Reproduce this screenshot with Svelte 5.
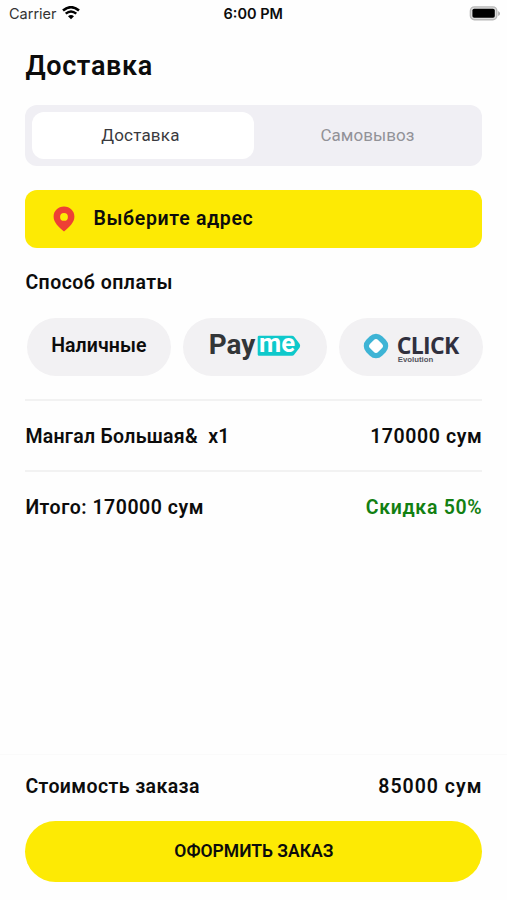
<script lang="ts">
    let mode = $state("delivery");

    const modes = [
        { id: "delivery", label: "Доставка" },
        { id: "pickup", label: "Самовывоз" },
    ];

    const price = 170000;
    const discount = 50;
    const total = price * (100 - discount) / 100;
</script>

<div class="screen">
    <div class="status">
        <div class="carrier">
            <span>Carrier</span>
            <svg width="18" height="14" viewBox="0 0 18 14">
                <path d="M1 4.6 Q9 -2.2 17 4.6" fill="none" stroke="#000" stroke-width="2.6" />
                <path d="M3.7 7.7 Q9 3.2 14.3 7.7" fill="none" stroke="#000" stroke-width="2.4" />
                <path d="M6 10.2 Q9 7.6 12 10.2 L9 13.2 Z" />
            </svg>
        </div>
        <span class="time">6:00 PM</span>
        <svg class="battery" width="32" height="15" viewBox="0 0 32 15">
            <rect x="1.4" y="0.9" width="26.4" height="12.8" rx="4" fill="#ddd" stroke="#b8b8b8" stroke-width="1.4" />
            <rect x="3.4" y="2.8" width="22.4" height="9" rx="1.8" />
            <path d="M29.2 5 Q31 6 31 7.5 Q31 9 29.2 10 Z" fill="#aaa" />
        </svg>
    </div>

    <h1>Доставка</h1>

    <div class="tabs">
        {#each modes as item}
            <button class="tab {item.id}" class:active={mode === item.id} onclick={() => (mode = item.id)}>{item.label}</button>
        {/each}
    </div>

    <button class="address">
        <svg width="22" height="26" viewBox="0 0 22 26">
            <path fill="#ee4035" fill-rule="evenodd" d="M11 0.6 C5 0.6 0.6 5 0.6 10.6 C0.6 16.5 5.4 21 11 25.4 C16.6 21 21.4 16.5 21.4 10.6 C21.4 5 17 0.6 11 0.6 Z M11 7 A3.9 3.9 0 1 1 11 14.8 A3.9 3.9 0 1 1 11 7 Z" />
        </svg>
        <span>Выберите адрес</span>
    </button>

    <h2>Способ оплаты</h2>

    <div class="payments">
        <button class="pay cash">Наличные</button>
        <button class="pay" aria-label="Payme">
            <svg width="94" height="36" viewBox="0 0 94 36">
                <path d="M51 6.7 H84 Q85.4 6.7 86.3 7.9 L91.7 15 Q92.6 16.7 91.7 18.4 L86.3 25.5 Q85.4 26.7 84 26.7 H51 Q49.7 26.7 49.7 25.5 V7.9 Q49.7 6.7 51 6.7 Z" fill="#0fc9cb" />
                <text x="0.8" y="24.6" class="payme" fill="#333638" textLength="46.5" lengthAdjust="spacingAndGlyphs">Pay</text>
                <text x="51" y="23.4" class="payme me" fill="#fff" textLength="36" lengthAdjust="spacingAndGlyphs">me</text>
            </svg>
        </button>
        <button class="pay click">
            <svg width="28" height="28" viewBox="0 0 28 28">
                <rect x="5.5" y="5.5" width="17" height="17" rx="6" transform="rotate(45 14 14)" fill="#fff" stroke="#3eb4d5" stroke-width="5.4" />
            </svg>
            <span class="brand">
                <span class="word">CLICK</span>
                <span class="evolution">Evolution</span>
            </span>
        </button>
    </div>

    <div class="row item">
        <span class="name">Мангал Большая&amp;&nbsp; x1</span>
        <span class="sum">{price} сум</span>
    </div>
    <div class="row subtotal">
        <span class="all">Итого: {price} сум</span>
        <span class="discount">Скидка {discount}%</span>
    </div>

    <div class="footer">
        <div class="cost">
            <span class="label">Стоимость заказа</span>
            <span class="total">{total} сум</span>
        </div>
        <button class="submit">ОФОРМИТЬ ЗАКАЗ</button>
    </div>
</div>

<style>
    :global(body) {
        background: #fefefe;
    }

    .screen {
        width: 507px;
        height: 900px;
        box-sizing: border-box;
        padding: 0 24.6px 0 25.4px;
        display: flex;
        flex-direction: column;
        overflow: hidden;
        background: #fefefe;
        color: #0c0c0c;
        font: 600 19.5px Roboto, "Noto Sans", sans-serif;
    }

    button {
        border: 0;
        padding: 0;
        margin: 0;
        color: inherit;
        font: inherit;
        letter-spacing: inherit;
    }

    .status {
        display: grid;
        grid-template-columns: 1fr auto 1fr;
        align-items: center;
        height: 27px;
        margin: 0 -18px 0 -16.4px;
        font: 400 14.5px/27px Inter, sans-serif;
    }

    .carrier {
        display: flex;
        align-items: center;
        gap: 5px;
        color: #333;
    }

    .carrier svg {
        margin-bottom: 1px;
    }

    .time {
        margin-right: 3px;
        font-weight: 600;
    }

    .battery {
        justify-self: end;
        margin-right: -1px;
    }

    h1 {
        margin: 23px 0 0;
        height: 32px;
        font-size: 27px;
        font-weight: 600;
        letter-spacing: 0.65px;
        line-height: 32px;
    }

    .tabs {
        display: flex;
        box-sizing: border-box;
        height: 61px;
        margin-top: 23px;
        padding: 7px;
        border-radius: 12px;
        background: #f0eff4;
    }

    .tab {
        flex: 1;
        padding: 0 0 1px 5px;
        border-radius: 12px;
        background: none;
        color: #929298;
        font-size: 17px;
        font-weight: 400;
        letter-spacing: 0.05px;
    }

    .tab.active {
        padding: 0 6px 1px 0;
        background: #fff;
        color: #3a3a3e;
        letter-spacing: 0.2px;
    }

    .address {
        display: flex;
        align-items: center;
        gap: 18px;
        height: 58px;
        margin-top: 23.5px;
        padding-left: 28px;
        border-radius: 12px;
        background: #fdea04;
        letter-spacing: 0.68px;
    }

    h2 {
        margin: 23.5px 0 0;
        height: 24px;
        font-size: 19.5px;
        font-weight: 600;
        letter-spacing: 0.48px;
        line-height: 24px;
    }

    .payments {
        display: grid;
        grid-template-columns: repeat(3, 144px);
        gap: 12px;
        height: 58px;
        margin: 23px 0 0 2px;
    }

    .pay {
        display: flex;
        align-items: center;
        justify-content: center;
        border-radius: 29px;
        background: #f2f1f3;
    }

    .cash {
        padding: 0 1px 3px 0;
        letter-spacing: 0.1px;
    }

    .payme {
        font: 700 27px Roboto, sans-serif;
    }

    .me {
        font-size: 25.5px;
    }

    .click {
        gap: 6.5px;
        padding: 0 2px 2px 0;
    }

    .brand {
        display: flex;
        flex-direction: column;
        margin-top: 7px;
        text-align: left;
    }

    .word {
        color: #30303e;
        font: 700 23px/21px "Open Sans", sans-serif;
        letter-spacing: -0.7px;
    }

    .evolution {
        margin-left: 1px;
        color: #555560;
        font: 700 7.8px/8px "Liberation Sans", sans-serif;
    }

    .row {
        display: flex;
        align-items: center;
        justify-content: space-between;
        box-sizing: border-box;
        height: 71px;
        padding-top: 1px;
        border-top: 2px solid #f2f2f2;
    }

    .item {
        margin-top: 23px;
    }

    .name {
        letter-spacing: 0.28px;
    }

    .sum {
        letter-spacing: 0.6px;
    }

    .all {
        letter-spacing: 0.52px;
    }

    .discount {
        color: #128012;
        letter-spacing: 0.7px;
    }

    .footer {
        margin: auto -24.6px 0 -25.4px;
        height: 145px;
        padding: 0 24.6px 0 25.4px;
        border-top: 1px solid #fafafa;
    }

    .cost {
        display: flex;
        align-items: center;
        justify-content: space-between;
        height: 62px;
    }

    .label {
        letter-spacing: 0.4px;
    }

    .total {
        letter-spacing: 1px;
    }

    .submit {
        width: 100%;
        height: 61px;
        margin-top: 4px;
        padding-bottom: 1px;
        border-radius: 31px;
        background: #fdea04;
        font-size: 17.5px;
        letter-spacing: 0;
    }
</style>
